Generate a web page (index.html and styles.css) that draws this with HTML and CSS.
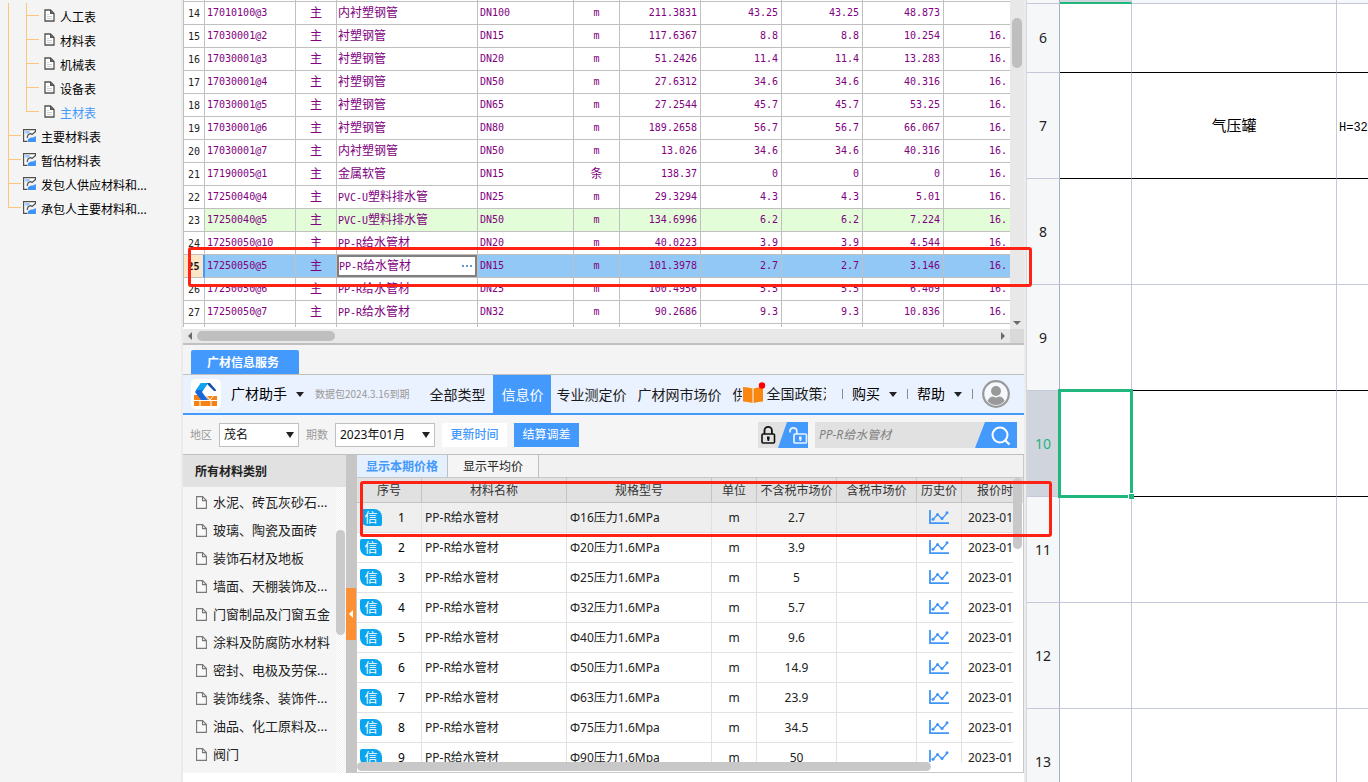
FILE: index.html
```html
<!DOCTYPE html>
<html lang="zh-CN">
<head>
<meta charset="utf-8">
<title>广材信息服务</title>
<link rel="stylesheet" href="styles.css">
</head>
<body>
<svg class="sprite" aria-hidden="true">
  <symbol id="page" viewBox="0 0 11 13"><path d="M1 1h5.500l3.500 3.500V12H1z" fill="#fff" stroke="#505050" stroke-width="1.300"/><path d="M6.500 1v3.500H10" fill="#666" stroke="#505050"/><path d="M3 5.500h2M3 7.500h5M3 9.500h5" stroke="#d0d0d0"/></symbol>
  <symbol id="report" viewBox="0 0 13 13"><path d="M4.500 12.400H.6V.6h11.800v2L9 5.500l-1.500-1L5 6 4 9" fill="#fafafa" stroke="#505050" stroke-width="1.200"/><path d="M2.200 2.200h4.500v2.300H2.200z" fill="#8cc4fb"/><path d="M5 12.900v-3L8 8.500h2l2.900-1.500v5.900z" fill="#3d94f6"/></symbol>
  <symbol id="file" viewBox="0 0 11 13"><path d="M.6.6h6L10.400 4.500v7.900H.6z" fill="#fafafa" stroke="#777" stroke-width="1.100"/><path d="M6.500.6v4h4" fill="none" stroke="#777" stroke-width="1.100"/></symbol>
  <symbol id="chart" viewBox="0 0 20 15"><path d="M1 0v13.200h19" fill="none" stroke="#4096f7" stroke-width="1.800"/><path d="m4 9.500 4.500-5 4.500 4.300 5.500-6" fill="none" stroke="#4096f7" stroke-width="1.300"/><g fill="#4096f7"><circle cx="4" cy="9.300" r="1.500"/><circle cx="8.500" cy="4.500" r="1.500"/><circle cx="13" cy="8.500" r="1.500"/><circle cx="18" cy="2.800" r="1.500"/></g></symbol>
</svg>
<div class="screen">
  <nav class="tree" aria-label="报表">
    <ul>
      <li class="child"><svg class="i-page"><use href="#page"/></svg>人工表</li>
      <li class="child"><svg class="i-page"><use href="#page"/></svg>材料表</li>
      <li class="child"><svg class="i-page"><use href="#page"/></svg>机械表</li>
      <li class="child"><svg class="i-page"><use href="#page"/></svg>设备表</li>
      <li class="child last current"><svg class="i-page"><use href="#page"/></svg>主材表</li>
      <li class="top"><svg class="i-report"><use href="#report"/></svg>主要材料表</li>
      <li class="top"><svg class="i-report"><use href="#report"/></svg>暂估材料表</li>
      <li class="top"><svg class="i-report"><use href="#report"/></svg>发包人供应材料和...</li>
      <li class="top last"><svg class="i-report"><use href="#report"/></svg>承包人主要材料和...</li>
    </ul>
  </nav>

  <main class="work">
    <section class="materials">
      <div class="grid-clip">
      <table class="grid">
        <colgroup><col class="g-no"><col class="g-code"><col class="g-type"><col class="g-name"><col class="g-spec"><col class="g-unit"><col class="g-num"><col class="g-num"><col class="g-num"><col class="g-num"><col></colgroup>
        <tbody>
        <tr class="edge-top"><td></td><td></td><td></td><td></td><td></td><td></td><td></td><td></td><td></td><td></td><td></td></tr>
        <tr><th>14</th><td>17010100@3</td><td>主</td><td>内衬塑钢管</td><td>DN100</td><td>m</td><td>211.3831</td><td>43.25</td><td>43.25</td><td>48.873</td><td></td></tr>
        <tr><th>15</th><td>17030001@2</td><td>主</td><td>衬塑钢管</td><td>DN15</td><td>m</td><td>117.6367</td><td>8.8</td><td>8.8</td><td>10.254</td><td>16.</td></tr>
        <tr><th>16</th><td>17030001@3</td><td>主</td><td>衬塑钢管</td><td>DN20</td><td>m</td><td>51.2426</td><td>11.4</td><td>11.4</td><td>13.283</td><td>16.</td></tr>
        <tr><th>17</th><td>17030001@4</td><td>主</td><td>衬塑钢管</td><td>DN50</td><td>m</td><td>27.6312</td><td>34.6</td><td>34.6</td><td>40.316</td><td>16.</td></tr>
        <tr><th>18</th><td>17030001@5</td><td>主</td><td>衬塑钢管</td><td>DN65</td><td>m</td><td>27.2544</td><td>45.7</td><td>45.7</td><td>53.25</td><td>16.</td></tr>
        <tr><th>19</th><td>17030001@6</td><td>主</td><td>衬塑钢管</td><td>DN80</td><td>m</td><td>189.2658</td><td>56.7</td><td>56.7</td><td>66.067</td><td>16.</td></tr>
        <tr><th>20</th><td>17030001@7</td><td>主</td><td>内衬塑钢管</td><td>DN50</td><td>m</td><td>13.026</td><td>34.6</td><td>34.6</td><td>40.316</td><td>16.</td></tr>
        <tr><th>21</th><td>17190005@1</td><td>主</td><td>金属软管</td><td>DN15</td><td class="han">条</td><td>138.37</td><td>0</td><td>0</td><td>0</td><td>16.</td></tr>
        <tr><th>22</th><td>17250040@4</td><td>主</td><td><span class="latin">PVC-U</span>塑料排水管</td><td>DN25</td><td>m</td><td>29.3294</td><td>4.3</td><td>4.3</td><td>5.01</td><td>16.</td></tr>
        <tr class="green"><th>23</th><td>17250040@5</td><td>主</td><td><span class="latin">PVC-U</span>塑料排水管</td><td>DN50</td><td>m</td><td>134.6996</td><td>6.2</td><td>6.2</td><td>7.224</td><td>16.</td></tr>
        <tr><th>24</th><td>17250050@10</td><td>主</td><td><span class="latin">PP-R</span>给水管材</td><td>DN20</td><td>m</td><td>40.0223</td><td>3.9</td><td>3.9</td><td>4.544</td><td>16.</td></tr>
        <tr class="selected"><th>25</th><td>17250050@5</td><td>主</td><td class="editing"><div class="editor"><span><span class="latin">PP-R</span>给水管材</span><button type="button" aria-label="更多"><i></i><i></i><i></i></button></div></td><td>DN15</td><td>m</td><td>101.3978</td><td>2.7</td><td>2.7</td><td>3.146</td><td>16.</td></tr>
        <tr><th>26</th><td>17250050@6</td><td>主</td><td><span class="latin">PP-R</span>给水管材</td><td>DN25</td><td>m</td><td>100.4956</td><td>5.5</td><td>5.5</td><td>6.409</td><td>16.</td></tr>
        <tr><th>27</th><td>17250050@7</td><td>主</td><td><span class="latin">PP-R</span>给水管材</td><td>DN32</td><td>m</td><td>90.2686</td><td>9.3</td><td>9.3</td><td>10.836</td><td>16.</td></tr>
        <tr class="edge-bottom"><td></td><td></td><td></td><td></td><td></td><td></td><td></td><td></td><td></td><td></td><td></td></tr>
        </tbody>
      </table>
      </div>
      <div class="vbar"><span class="vthumb"></span><span class="tri down"></span></div>
      <div class="hbar"><span class="tri left"></span><span class="hthumb"></span><span class="tri right"></span></div>
      <div class="corner"></div>
    </section>

    <div class="service-tabs"><button type="button">广材信息服务</button></div>

    <header class="nav">
      <span class="logo"><svg viewBox="0 0 30 30">
        <path d="M3 16h4l4 5h6l-2-4h11v10H3z" fill="#f58216"/>
        <path d="M3 21.500h23M9 22v5M20 22v5M15 16l4 5 4-5" stroke="#fff" fill="none"/>
        <path d="M10 4h7l-6 9 6 8h-7L4 13z" fill="#1768dc"/><path d="M10 4h7l-5 7H5z" fill="#0fa4ee"/><path d="M16 4h3l6 7v1h-2l-6-6z" fill="#1550a8"/></svg></span>
      <button type="button" class="brand">广材助手<i class="caret"></i></button>
      <span class="expire">数据包2024.3.16到期</span>
      <div class="links">
        <a href="#">全部类型</a><a href="#" class="on">信息价</a><a href="#">专业测定价</a><a href="#">广材网市场价</a><a href="#" class="cut">供</a>
      </div>
      <a href="#" class="policy"><svg viewBox="0 0 24 22"><path d="M1 5q5 0 9.500 1.500V21Q6 19.500 1 19.500zM21 5q-5 0-9.500 1.500V21q4.500-1.500 9.500-1.500z" fill="#fb860f"/><path d="M10.500 6.500V21h1V6.500z" fill="#ffc88c"/><circle cx="20" cy="3.500" r="3.200" fill="#f00"/></svg><span>全国政策法规</span></a>
      <div class="account">
        <button type="button">购买<i class="caret"></i></button>
        <button type="button">帮助<i class="caret"></i></button>
        <button type="button" aria-label="账户"><svg class="avatar" viewBox="0 0 28 28"><circle cx="14" cy="14" r="12.800" fill="#f5f8fd" stroke="#999" stroke-width="2.200"/><circle cx="14" cy="11" r="5" fill="#999"/><path d="M5.500 21q2-4.500 5.500-4.500 3 2 6 0 4 0 5.500 4.500-3.500 4-8.500 4t-8.500-4z" fill="#999"/></svg></button>
      </div>
    </header>

    <form class="filters">
      <label for="area">地区</label>
      <span class="pick area"><select id="area"><option>茂名</option></select></span>
      <label for="term">期数</label>
      <span class="pick term"><select id="term"><option>2023年01月</option></select></span>
      <button type="button" class="act plain">更新时间</button>
      <button type="button" class="act">结算调差</button>
      <div class="lock">
        <button type="button" aria-label="锁定"><svg viewBox="0 0 50 26"><path d="M0 0h50v26H0z" fill="#e1e1e1"/><path d="M29 0h21v26H20z" fill="#4499fc"/><path d="M6.500 12V8.500a3.700 3.700 0 0 1 7.400 0V12" fill="none" stroke="#111" stroke-width="1.800"/><rect x="4" y="12" width="12.500" height="9" rx="1" fill="#e1e1e1" stroke="#111" stroke-width="1.600"/><path d="M9 14.500h2.600v2L11 19H9.700L9 16.500z" fill="#111"/><path d="M32 10.500V8.500a3.500 3.500 0 0 1 6.800 0V12" fill="none" stroke="#e8f3ff" stroke-width="1.700"/><rect x="36" y="12" width="12.500" height="9" rx="1" fill="none" stroke="#e8f3ff" stroke-width="1.700"/><path d="M41 14.500h2.600v2L43 19h-1.300L41 16.500z" fill="#e8f3ff"/></svg></button>
      </div>
      <div class="search">
        <input type="text" aria-label="搜索" placeholder="PP-R给水管材">
        <button type="button" aria-label="搜索"><svg viewBox="0 0 42 26"><path d="M10 0h32v26H0z" fill="#4499fc"/><circle cx="25" cy="13" r="7.500" fill="none" stroke="#fff" stroke-width="2"/><path d="m30 18 4.500 4.500" stroke="#fff" stroke-width="2.200"/></svg></button>
      </div>
    </form>

    <section class="lower">
      <aside class="cats">
        <h2>所有材料类别</h2>
        <div class="cats-body">
          <ul>
            <li><svg><use href="#file"/></svg>水泥、砖瓦灰砂石...</li>
            <li><svg><use href="#file"/></svg>玻璃、陶瓷及面砖</li>
            <li><svg><use href="#file"/></svg>装饰石材及地板</li>
            <li><svg><use href="#file"/></svg>墙面、天棚装饰及...</li>
            <li><svg><use href="#file"/></svg>门窗制品及门窗五金</li>
            <li><svg><use href="#file"/></svg>涂料及防腐防水材料</li>
            <li><svg><use href="#file"/></svg>密封、电极及劳保...</li>
            <li><svg><use href="#file"/></svg>装饰线条、装饰件...</li>
            <li><svg><use href="#file"/></svg>油品、化工原料及...</li>
            <li><svg><use href="#file"/></svg>阀门</li>
          </ul>
          <div class="cats-bar"><span></span></div>
        </div>
      </aside>
      <div class="splitter"><button type="button" aria-label="收起"><span class="fold"></span></button></div>
      <div class="prices">
        <div class="tabs"><button type="button" class="on">显示本期价格</button><button type="button">显示平均价</button></div>
        <div class="price-area">
          <div class="price-clip">
          <table class="price">
            <colgroup><col class="p-no"><col class="p-name"><col class="p-name"><col class="p-s"><col class="p-m"><col class="p-m"><col class="p-s"><col></colgroup>
            <thead><tr><th>序号</th><th>材料名称</th><th>规格型号</th><th>单位</th><th>不含税市场价</th><th>含税市场价</th><th>历史价</th><th>报价时</th></tr></thead>
            <tbody>
            <tr class="hot"><td><b>信</b><span>1</span></td><td>PP-R给水管材</td><td>Φ16压力1.6MPa</td><td>m</td><td>2.7</td><td></td><td><svg><use href="#chart"/></svg></td><td>2023-01</td></tr>
            <tr><td><b>信</b><span>2</span></td><td>PP-R给水管材</td><td>Φ20压力1.6MPa</td><td>m</td><td>3.9</td><td></td><td><svg><use href="#chart"/></svg></td><td>2023-01</td></tr>
            <tr><td><b>信</b><span>3</span></td><td>PP-R给水管材</td><td>Φ25压力1.6MPa</td><td>m</td><td>5</td><td></td><td><svg><use href="#chart"/></svg></td><td>2023-01</td></tr>
            <tr><td><b>信</b><span>4</span></td><td>PP-R给水管材</td><td>Φ32压力1.6MPa</td><td>m</td><td>5.7</td><td></td><td><svg><use href="#chart"/></svg></td><td>2023-01</td></tr>
            <tr><td><b>信</b><span>5</span></td><td>PP-R给水管材</td><td>Φ40压力1.6MPa</td><td>m</td><td>9.6</td><td></td><td><svg><use href="#chart"/></svg></td><td>2023-01</td></tr>
            <tr><td><b>信</b><span>6</span></td><td>PP-R给水管材</td><td>Φ50压力1.6MPa</td><td>m</td><td>14.9</td><td></td><td><svg><use href="#chart"/></svg></td><td>2023-01</td></tr>
            <tr><td><b>信</b><span>7</span></td><td>PP-R给水管材</td><td>Φ63压力1.6MPa</td><td>m</td><td>23.9</td><td></td><td><svg><use href="#chart"/></svg></td><td>2023-01</td></tr>
            <tr><td><b>信</b><span>8</span></td><td>PP-R给水管材</td><td>Φ75压力1.6Mpa</td><td>m</td><td>34.5</td><td></td><td><svg><use href="#chart"/></svg></td><td>2023-01</td></tr>
            <tr><td><b>信</b><span>9</span></td><td>PP-R给水管材</td><td>Φ90压力1.6Mpa</td><td>m</td><td>50</td><td></td><td><svg><use href="#chart"/></svg></td><td>2023-01</td></tr>
            </tbody>
          </table>
          </div>
          <div class="price-v"><span></span></div>
          <div class="price-h"><span></span></div>
        </div>
      </div>
    </section>
  </main>

  <section class="sheet">
    <table>
      <colgroup><col class="s-head"><col class="s-a"><col class="s-b"><col></colgroup>
      <tbody>
      <tr class="cols"><th></th><td class="active-col"></td><td></td><td></td></tr>
      <tr class="short dark"><th>6</th><td></td><td></td><td></td></tr>
      <tr class="dark"><th>7</th><td></td><td>气压罐</td><td class="over">H=32</td></tr>
      <tr><th>8</th><td></td><td></td><td></td></tr>
      <tr class="dark"><th>9</th><td></td><td></td><td></td></tr>
      <tr class="dark"><th class="active-row">10</th><td class="cell-on"><span class="ring"></span></td><td></td><td></td></tr>
      <tr><th>11</th><td></td><td></td><td></td></tr>
      <tr><th>12</th><td></td><td></td><td></td></tr>
      <tr><th>13</th><td></td><td></td><td></td></tr>
      </tbody>
    </table>
  </section>

  <div class="mark mark-material"></div>
  <div class="mark mark-price"></div>
</div>
</body>
</html>
```
FILE: styles.css
```css
* { box-sizing: border-box; }
body {
  margin: 0;
  color: #222;
  background: #fff;
  font: 12px/18px "Noto Sans", "Noto Sans CJK SC", sans-serif;
}
ul, h2 { margin: 0; padding: 0; list-style: none; }
a { color: inherit; text-decoration: none; }
button { margin: 0; padding: 0; border: 0; background: none; color: inherit; font: inherit; cursor: pointer; }
table { border-collapse: separate; border-spacing: 0; table-layout: fixed; width: 100%; }
th, td { padding: 0; overflow: hidden; white-space: nowrap; font-weight: normal; }
.sprite { position: absolute; width: 0; height: 0; }

.screen {
  position: relative;
  display: grid;
  grid-template-columns: 183px minmax(0, 841fr) minmax(0, 344fr);
  grid-template-rows: minmax(0, 1fr);
  height: 100vh;
  overflow: hidden;
}

/* Report tree */
.tree { background: #f4f4f4; border-right: 2px solid #ebebeb; padding-top: 3px; color: #000; }
.tree li {
  display: flex;
  align-items: center;
  height: 24px;
  background-repeat: no-repeat;
  background-image: linear-gradient(#fdc67c, #fdc67c), linear-gradient(#fdc67c, #fdc67c), linear-gradient(#fdc67c, #fdc67c);
  white-space: nowrap;
}
.tree .child {
  padding: 6px 0 0 44px;
  gap: 5px;
  background-position: 8px 0, 26px 0, 27px 12px;
  background-size: 1px 100%, 1px 100%, 12px 1px;
}
.tree .child.last { background-size: 1px 100%, 1px 13px, 12px 1px; }
.tree .top {
  padding: 6px 0 0 23px;
  gap: 5px;
  background-position: 8px 0, 8px 0, 9px 12px;
  background-size: 1px 100%, 1px 100%, 12px 1px;
}
.tree .top.last { background-size: 1px 13px, 1px 13px, 12px 1px; }
.tree .current { color: #4499fc; }
.tree svg { margin-bottom: 5px; }
.i-page { width: 11px; height: 13px; }
.i-report { width: 13px; height: 13px; }

/* Material grid */
.work { display: flex; flex-direction: column; min-width: 0; min-height: 0; }
.materials {
  display: grid;
  flex: none;
  grid-template-columns: minmax(0, 1fr) 14px;
  grid-template-rows: auto 14px;
  border-bottom: 2px solid #c0c0c0;
}
.grid-clip { overflow: hidden; padding-bottom: 2px; }
.grid { border-left: 1px solid #c0c0c0; color: #800080; font: 10px/16px "DejaVu Sans Mono", "Noto Sans CJK SC", monospace; }
.g-no { width: 21px; }
.g-code { width: 91px; }
.g-type { width: 41px; }
.g-name { width: 141px; }
.g-spec { width: 96px; }
.g-unit { width: 46px; }
.g-num { width: 81px; }
.grid th, .grid td { height: 23px; border: solid #c0c0c0; border-width: 0 1px 1px 0; text-align: right; padding: 0 3px 0 0; }
.grid th { color: #222; text-align: center; padding: 2px 0 0; }
.grid td:nth-child(2), .grid td:nth-child(5) { text-align: left; padding-left: 2px; }
.grid td:nth-child(3) { text-align: center; font-size: 12px; padding: 0; }
.grid td:nth-child(4) { text-align: left; padding-left: 1px; font-size: 12px; }
.grid td:nth-child(6) { text-align: center; padding: 0; }
.grid td.han { font-size: 12px; }
.grid td:last-child { border-right: 0; }
.grid .latin { font-size: 10px; }
.grid .edge-top td { height: 2px; padding: 0; }
.grid .edge-bottom td { height: 3px; padding: 0; border-bottom: 0; }
.grid .green td { background: #e3fdd9; }
.grid .selected td { background: #91c8f6; }
.grid .selected th { background: #fde5c8; color: #111; font-weight: bold; border-right: 2px solid #4499fc; }
.grid .selected td.editing { padding: 0; background: #fff; }
.editor { display: flex; justify-content: space-between; align-items: center; height: 22px; padding: 0 2px 0 0; border: 2px solid #7f7f7f; }
.editor button { display: flex; gap: 2px; padding: 4px 1px; }
.editor i { width: 2px; height: 2px; background: #5b9bd5; }
.vbar { display: flex; flex-direction: column; justify-content: space-between; align-items: center; padding: 18px 0 4px; background: #e8e8e8; }
.vthumb { width: 10px; height: 50px; border-radius: 5px; background: #bfbfbf; }
.hbar { display: flex; align-items: center; padding: 0 5px; gap: 5px; background: #e8e8e8; }
.hthumb { width: 138px; height: 10px; border-radius: 5px; background: #bfbfbf; }
.corner { background: #d9d9d9; }
.tri { border: 4px solid transparent; }
.tri.down { border-top-color: #6a6a70; border-bottom: 0; }
.tri.left { border-right-color: #6a6a70; border-left: 0; }
.tri.right { border-left-color: #6a6a70; border-right: 0; margin-left: auto; }

/* Service tab and navigation */
.service-tabs { display: flex; flex: none; align-items: flex-end; height: 30px; padding-left: 8px; background: #f4f4f4; border-bottom: 1px solid #c0c0c0; }
.service-tabs button { width: 108px; height: 24px; padding: 1px 4px 0 0; background: #4499fc; color: #fff; font-weight: bold; border-radius: 2px 2px 0 0; }
.nav { display: flex; flex: none; align-items: center; height: 40px; padding: 0 14px 0 8px; background: #ebf2ff; border-bottom: 2px solid #4499fc; font-size: 14px; color: #1a1a1a; white-space: nowrap; }
.logo { width: 30px; height: 30px; border-radius: 5px; background: #fff; }
.logo svg { display: block; }
.brand { display: flex; align-items: center; gap: 9px; margin-left: 10px; color: #000; }
.caret { display: inline-block; border: 4px solid transparent; border-top: 5px solid #222; border-bottom: 0; }
.expire { margin-left: 11px; color: #999; font: 10px/18px "Noto Sans CJK SC", sans-serif; }
.links { display: flex; align-self: stretch; align-items: center; margin-left: 14px; }
.links a { height: 38px; line-height: 40px; padding: 0 6px 0 5px; }
.links .on { background: #4499fc; color: #fff; padding: 0 8px; }
.links a:first-child { padding: 0 8px 0 6px; }
.links .cut { width: 15px; overflow: hidden; padding-right: 0; }
.policy { display: flex; align-items: center; line-height: 22px; }
.policy svg { width: 24px; height: 22px; margin-bottom: 2px; }
.policy span { width: 60px; overflow: hidden; }
.account { display: flex; align-items: center; margin-left: auto; color: #000; }
.account button { display: flex; align-items: center; gap: 9px; }
.account button::before { content: ""; width: 1px; height: 10px; background: #8c8c8c; }
.account button + button { margin-left: 10px; }
.avatar { width: 28px; height: 28px; }

/* Filter bar */
.filters { display: flex; flex: none; align-items: center; gap: 7px; height: 40px; padding: 0 7px; background: #f5f5f5; border-bottom: 1px solid #c0c0c0; }
.filters label { color: #999; font-size: 11px; }
.pick { position: relative; height: 24px; }
.pick select { appearance: none; width: 100%; height: 24px; margin: 0; padding: 0 4px; border: 1px solid #c0c0c0; border-radius: 0; background: #fff; color: #111; font: inherit; display: block; }
.pick::after { content: ""; position: absolute; right: 5px; top: 9px; border: 4px solid transparent; border-top: 6px solid #222; border-bottom: 0; pointer-events: none; }
.area { width: 80px; }
.term { width: 100px; }
.act { width: 65px; height: 24px; background: #4499fc; color: #fff; }
.act.plain { background: #fff; color: #4499fc; font-weight: 500; }
.lock { margin-left: auto; }
.lock button, .lock svg { display: block; width: 50px; height: 26px; }
.search { display: flex; width: 202px; background: #e1e1e1; }
.search input { flex: 1; min-width: 0; height: 26px; padding: 0 4px; border: 0; background: none; font: inherit; font-style: italic; }
.search input::placeholder { color: #808080; opacity: 1; }
.search svg { display: block; width: 42px; height: 26px; }

/* Category list */
.lower { display: flex; flex: 1; min-height: 0; margin-bottom: 9px; }
.cats { display: flex; flex-direction: column; width: 163px; background: #f5f5f5; overflow: hidden; }
.cats h2 { flex: none; height: 32px; padding-left: 12px; background: #e1e1e1; font-size: 12px; line-height: 33px; }
.cats-body { display: flex; flex: 1; min-height: 0; }
.cats ul { flex: 1; min-width: 0; padding-top: 1px; }
.cats li { display: flex; align-items: center; gap: 6px; height: 28px; padding-left: 13px; font-size: 13px; white-space: nowrap; }
.cats li svg { flex: none; width: 11px; height: 13px; }
.cats-bar { width: 10px; padding-top: 43px; background: repeating-conic-gradient(#fdfdfd 0 25%, #f2f2f2 0 50%) 0 0 / 2px 2px; }
.cats-bar span { display: block; width: 9px; height: 105px; border-radius: 5px; background: #cacaca; }
.splitter { width: 11px; padding-top: 133px; background: #c8c6c5; }
.splitter button { display: flex; align-items: center; justify-content: center; width: 10px; height: 52px; background: #fc9035; }
.fold { border: 4px solid transparent; border-right-color: #fff; border-left: 0; }

/* Price list */
.prices { display: flex; flex-direction: column; flex: 1; min-width: 0; border-right: 1px solid #c8c8c8; background: #fff; }
.tabs { display: flex; flex: none; height: 23px; background: #f1f1f1; border-bottom: 1px solid #c8c8c8; }
.tabs button { width: 91px; padding-top: 2px; background: #f5f5f5; border-right: 1px solid #c0c0c0; }
.tabs .on { background: #e5f0fe; color: #4499fc; font-weight: bold; }
.price-area { display: grid; grid-template-columns: minmax(0, 1fr) 10px; grid-template-rows: minmax(0, 1fr) 10px; flex: 1; min-height: 0; border-bottom: 1px solid #c8c8c8; }
.price-clip { overflow: hidden; }
.p-no { width: 65px; }
.p-name { width: 145px; }
.p-s { width: 45px; }
.p-m { width: 80px; }
.price th { height: 25px; padding-top: 2px; background: #e1e1e1; border: solid #c4c4c4; border-width: 0 1px 1px 0; color: #333; }
.price td { height: 30px; border: solid #e2e2e2; border-width: 0 1px 1px 0; text-align: center; }
.price td:nth-child(2), .price td:nth-child(3) { text-align: left; padding-left: 3px; }
.price th:last-child, .price td:last-child { border-right: 0; text-align: left; padding-left: 6px; }
.price th:last-child { padding-left: 15px; }
.price td:first-child { text-align: left; padding-left: 3px; }
.price td:first-child span { margin-left: 16px; color: #000; }
.price b { display: inline-block; width: 22px; height: 17px; border-radius: 2px 8px 2px 8px; background: #0ba4ee; color: #fff; font-weight: normal; font-size: 13px; line-height: 17px; text-align: center; }
.price svg { display: block; width: 20px; height: 15px; margin: 0 auto; }
.price .hot td { background: #efefef; }
.price-v { grid-row: 1 / 3; grid-column: 2; background: linear-gradient(#e1e1e1 25px, #fff 25px); }
.price-v span { display: block; width: 9px; height: 71px; border-radius: 5px; background: #c8c8c8; }
.price-h span { display: block; width: 574px; height: 9px; border-radius: 5px; background: #c8c8c8; }

/* Spreadsheet */
.sheet { min-width: 0; overflow: hidden; border-left: 2px solid #ececec; background: #fff; }
.sheet table { border-left: 1px solid #d5d8dc; }
.s-head { width: 33px; }
.s-a { width: 72px; }
.s-b { width: 205px; }
.sheet th, .sheet td { height: 106px; border: solid #c3c8da; border-width: 0 1px 1px 0; text-align: center; vertical-align: middle; }
.sheet th { border-right-color: #a8b0c8; background: #f6f7f9; color: #222; font-size: 14px; }
.sheet td { padding-top: 4px; color: #000; font: 15px/20px "Liberation Mono", "Noto Sans CJK SC", monospace; }
.sheet td.over { padding-left: 2px; font-size: 12px; text-align: left; }
.sheet td:last-child { border-right: 0; }
.sheet .short th, .sheet .short td { height: 69px; }
.sheet .dark td { border-bottom-color: #000; }
.sheet tr:nth-child(4) td { border-bottom-color: #c3c8da; }
.sheet .cols th, .sheet .cols td { height: 4px; padding: 0; background: #f6f7f9; }
.sheet .cols .active-col { background: #d0d4dd; border-bottom: 2px solid #21b67c; }
.sheet .active-row { background: #d0d4dd; color: #21b67c; }
.sheet .cell-on { position: relative; overflow: visible; }
.ring { position: absolute; inset: -2px; border: 3px solid #21b67c; }
.ring::after { content: ""; position: absolute; right: -4px; bottom: -4px; width: 5px; height: 5px; border: solid #fff; border-width: 1px 0 0 1px; background: #21b67c; box-sizing: content-box; }

/* Highlight frames laid over the panels */
.mark { position: absolute; border: 3px solid #ff2113; border-radius: 3px; pointer-events: none; }
.mark-material { left: 188px; top: 247px; width: 844px; height: 40px; }
.mark-price { left: 360px; top: 481px; width: 692px; height: 56px; }
```
